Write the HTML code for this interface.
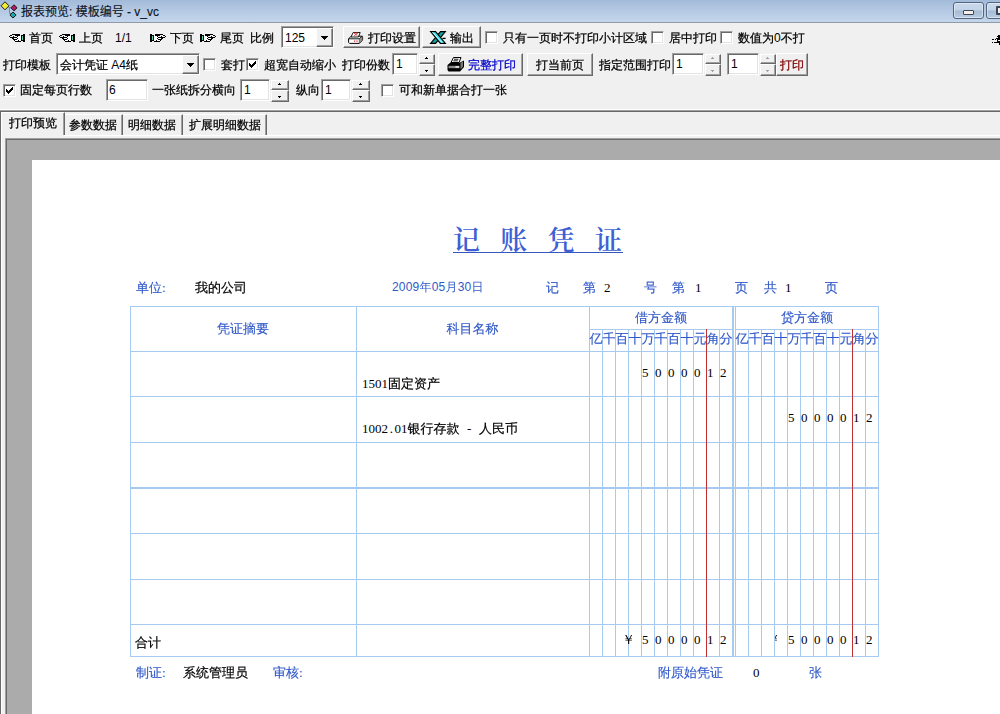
<!DOCTYPE html>
<html lang="zh-CN"><head><meta charset="utf-8"><title>报表预览</title>
<style>
html,body{margin:0;padding:0}
body{width:1000px;height:714px;overflow:hidden;background:#f0f0f0;position:relative;font-family:"Liberation Sans","WenQuanYi Zen Hei",sans-serif;font-size:12px;color:#000}
div,span{position:absolute;box-sizing:border-box;white-space:nowrap}
.t{line-height:14px;height:14px;-webkit-text-stroke:0.25px currentColor}
.l{position:static;-webkit-text-stroke:0}
.btn{border:1px solid;border-color:#fff #696969 #696969 #fff;box-shadow:inset -1px -1px 0 #a0a0a0;background:#f0f0f0}
.edit{border:1px solid;border-color:#a0a0a0 #fff #fff #a0a0a0;box-shadow:inset 1px 1px 0 #696969,inset -1px -1px 0 #e3e3e3;background:#fff}
.cb{width:13px;height:13px;border:1px solid;border-color:#a0a0a0 #fff #fff #a0a0a0;box-shadow:inset 1px 1px 0 #696969,inset -1px -1px 0 #e3e3e3;background:#fff}
.sp{border:1px solid;border-color:#fff #696969 #696969 #fff;box-shadow:inset -1px -1px 0 #a0a0a0;background:#f0f0f0}
.vl{width:1px;background:#a6caf0}
.hl{height:1px;background:#a6caf0}
.d{font-family:"Liberation Serif","WenQuanYi Zen Hei",serif;font-size:13px;line-height:15px;height:15px}
.b{color:#3059c9;-webkit-text-stroke:0.15px #3059c9}
.k{-webkit-text-stroke:0.2px #000}
.n{position:static;-webkit-text-stroke:0}
.h{position:static;display:inline-block;width:6.5px;text-align:center}
svg{position:absolute;overflow:visible}
</style></head>
<body>
<div style="left:0;top:0;width:1000px;height:22px;background:linear-gradient(180deg,#a2bbd9 0%,#b5c9e3 50%,#c4d6ec 100%)"></div>
<div style="left:0;top:22px;width:1000px;height:1px;background:#8f9aa6"></div>
<svg style="left:0;top:0" width="20" height="22" viewBox="0 0 20 22">
<path d="M8.5 7.5H11M9.5 7.5V13.5H11" stroke="#7d8794" fill="none" stroke-width="1"/>
<path d="M5 1.8L9 5.8L5 9.8L1 5.8Z" fill="#f4ec30" stroke="#1a1a1a" stroke-width="1"/>
<path d="M14 4.8L17.1 7.8L14 10.8L10.9 7.8Z" fill="#b4186c" stroke="#1a1a1a" stroke-width="1"/>
<path d="M13 12L16.1 15L13 18L9.9 15Z" fill="#18aaaa" stroke="#1a1a1a" stroke-width="1"/>
</svg>
<div class="t" style="left:21px;top:4px;font-family:'Liberation Sans','Noto Sans CJK SC',sans-serif;font-size:12px;line-height:16px;height:16px;color:#10151f;-webkit-text-stroke:0.15px #10151f">报表预览: 模板编号 - v_vc</div>
<div style="left:953px;top:2px;width:31px;height:17px;border:1px solid #52657f;border-radius:3px;background:linear-gradient(180deg,#c9d9ec 0%,#c2d3e8 48%,#a5bad4 52%,#b9cce3 100%);box-shadow:inset 0 0 0 1px rgba(255,255,255,.45)"></div>
<div style="left:963px;top:10px;width:11px;height:5px;border:1px solid #3c4656;border-radius:1px;background:#f4efec"></div>
<div style="left:986px;top:2px;width:31px;height:17px;border:1px solid #52657f;border-radius:3px;background:linear-gradient(180deg,#c9d9ec 0%,#c2d3e8 48%,#a5bad4 52%,#b9cce3 100%);box-shadow:inset 0 0 0 1px rgba(255,255,255,.45)"></div>
<div style="left:996px;top:6px;width:10px;height:9px;border:2px solid #3c4656;border-radius:1px;background:#f4efec"></div>
<svg style="left:9px;top:34px" width="16" height="8" viewBox="0 0 16 8" shape-rendering="crispEdges"><g><rect x="3" y="0" width="8" height="1" fill="#000"/><rect x="14" y="0" width="2" height="1" fill="#000"/><rect x="1" y="1" width="2" height="1" fill="#000"/><rect x="6" y="1" width="5" height="1" fill="#000"/><rect x="12" y="1" width="4" height="1" fill="#000"/><rect x="0" y="2" width="1" height="1" fill="#000"/><rect x="4" y="2" width="1" height="1" fill="#000"/><rect x="8" y="2" width="1" height="1" fill="#000"/><rect x="9" y="2" width="3" height="1" fill="#fff"/><rect x="12" y="2" width="1" height="1" fill="#000"/><rect x="13" y="2" width="1" height="1" fill="#58d8b8"/><rect x="14" y="2" width="2" height="1" fill="#000"/><rect x="1" y="3" width="7" height="1" fill="#000"/><rect x="8" y="3" width="4" height="1" fill="#fff"/><rect x="12" y="3" width="1" height="1" fill="#000"/><rect x="13" y="3" width="1" height="1" fill="#58d8b8"/><rect x="14" y="3" width="2" height="1" fill="#000"/><rect x="3" y="4" width="2" height="1" fill="#000"/><rect x="5" y="4" width="3" height="1" fill="#fff"/><rect x="8" y="4" width="1" height="1" fill="#000"/><rect x="9" y="4" width="3" height="1" fill="#fff"/><rect x="12" y="4" width="1" height="1" fill="#000"/><rect x="13" y="4" width="1" height="1" fill="#58d8b8"/><rect x="14" y="4" width="2" height="1" fill="#000"/><rect x="4" y="5" width="4" height="1" fill="#000"/><rect x="8" y="5" width="4" height="1" fill="#fff"/><rect x="12" y="5" width="1" height="1" fill="#000"/><rect x="13" y="5" width="1" height="1" fill="#58d8b8"/><rect x="14" y="5" width="2" height="1" fill="#000"/><rect x="5" y="6" width="1" height="1" fill="#000"/><rect x="6" y="6" width="3" height="1" fill="#fff"/><rect x="9" y="6" width="1" height="1" fill="#000"/><rect x="10" y="6" width="2" height="1" fill="#fff"/><rect x="12" y="6" width="4" height="1" fill="#000"/><rect x="6" y="7" width="6" height="1" fill="#000"/><rect x="14" y="7" width="2" height="1" fill="#000"/></g></svg>
<div class="t" style="left:29px;top:31px;">首页</div>
<svg style="left:59px;top:34px" width="16" height="8" viewBox="0 0 16 8" shape-rendering="crispEdges"><g><rect x="3" y="0" width="8" height="1" fill="#000"/><rect x="14" y="0" width="2" height="1" fill="#000"/><rect x="1" y="1" width="2" height="1" fill="#000"/><rect x="6" y="1" width="5" height="1" fill="#000"/><rect x="12" y="1" width="4" height="1" fill="#000"/><rect x="0" y="2" width="1" height="1" fill="#000"/><rect x="4" y="2" width="1" height="1" fill="#000"/><rect x="8" y="2" width="1" height="1" fill="#000"/><rect x="9" y="2" width="3" height="1" fill="#fff"/><rect x="12" y="2" width="1" height="1" fill="#000"/><rect x="13" y="2" width="1" height="1" fill="#58d8b8"/><rect x="14" y="2" width="2" height="1" fill="#000"/><rect x="1" y="3" width="7" height="1" fill="#000"/><rect x="8" y="3" width="4" height="1" fill="#fff"/><rect x="12" y="3" width="1" height="1" fill="#000"/><rect x="13" y="3" width="1" height="1" fill="#58d8b8"/><rect x="14" y="3" width="2" height="1" fill="#000"/><rect x="3" y="4" width="2" height="1" fill="#000"/><rect x="5" y="4" width="3" height="1" fill="#fff"/><rect x="8" y="4" width="1" height="1" fill="#000"/><rect x="9" y="4" width="3" height="1" fill="#fff"/><rect x="12" y="4" width="1" height="1" fill="#000"/><rect x="13" y="4" width="1" height="1" fill="#58d8b8"/><rect x="14" y="4" width="2" height="1" fill="#000"/><rect x="4" y="5" width="4" height="1" fill="#000"/><rect x="8" y="5" width="4" height="1" fill="#fff"/><rect x="12" y="5" width="1" height="1" fill="#000"/><rect x="13" y="5" width="1" height="1" fill="#58d8b8"/><rect x="14" y="5" width="2" height="1" fill="#000"/><rect x="5" y="6" width="1" height="1" fill="#000"/><rect x="6" y="6" width="3" height="1" fill="#fff"/><rect x="9" y="6" width="1" height="1" fill="#000"/><rect x="10" y="6" width="2" height="1" fill="#fff"/><rect x="12" y="6" width="4" height="1" fill="#000"/><rect x="6" y="7" width="6" height="1" fill="#000"/><rect x="14" y="7" width="2" height="1" fill="#000"/></g></svg>
<div class="t" style="left:79px;top:31px;">上页</div>
<div class="t" style="left:115px;top:31px;"><span class="l">1/1</span></div>
<svg style="left:150px;top:34px" width="16" height="8" viewBox="0 0 16 8" shape-rendering="crispEdges"><g transform="translate(16,0) scale(-1,1)"><rect x="3" y="0" width="8" height="1" fill="#000"/><rect x="14" y="0" width="2" height="1" fill="#000"/><rect x="1" y="1" width="2" height="1" fill="#000"/><rect x="6" y="1" width="5" height="1" fill="#000"/><rect x="12" y="1" width="4" height="1" fill="#000"/><rect x="0" y="2" width="1" height="1" fill="#000"/><rect x="4" y="2" width="1" height="1" fill="#000"/><rect x="8" y="2" width="1" height="1" fill="#000"/><rect x="9" y="2" width="3" height="1" fill="#fff"/><rect x="12" y="2" width="1" height="1" fill="#000"/><rect x="13" y="2" width="1" height="1" fill="#58d8b8"/><rect x="14" y="2" width="2" height="1" fill="#000"/><rect x="1" y="3" width="7" height="1" fill="#000"/><rect x="8" y="3" width="4" height="1" fill="#fff"/><rect x="12" y="3" width="1" height="1" fill="#000"/><rect x="13" y="3" width="1" height="1" fill="#58d8b8"/><rect x="14" y="3" width="2" height="1" fill="#000"/><rect x="3" y="4" width="2" height="1" fill="#000"/><rect x="5" y="4" width="3" height="1" fill="#fff"/><rect x="8" y="4" width="1" height="1" fill="#000"/><rect x="9" y="4" width="3" height="1" fill="#fff"/><rect x="12" y="4" width="1" height="1" fill="#000"/><rect x="13" y="4" width="1" height="1" fill="#58d8b8"/><rect x="14" y="4" width="2" height="1" fill="#000"/><rect x="4" y="5" width="4" height="1" fill="#000"/><rect x="8" y="5" width="4" height="1" fill="#fff"/><rect x="12" y="5" width="1" height="1" fill="#000"/><rect x="13" y="5" width="1" height="1" fill="#58d8b8"/><rect x="14" y="5" width="2" height="1" fill="#000"/><rect x="5" y="6" width="1" height="1" fill="#000"/><rect x="6" y="6" width="3" height="1" fill="#fff"/><rect x="9" y="6" width="1" height="1" fill="#000"/><rect x="10" y="6" width="2" height="1" fill="#fff"/><rect x="12" y="6" width="4" height="1" fill="#000"/><rect x="6" y="7" width="6" height="1" fill="#000"/><rect x="14" y="7" width="2" height="1" fill="#000"/></g></svg>
<div class="t" style="left:170px;top:31px;">下页</div>
<svg style="left:200px;top:34px" width="16" height="8" viewBox="0 0 16 8" shape-rendering="crispEdges"><g transform="translate(16,0) scale(-1,1)"><rect x="3" y="0" width="8" height="1" fill="#000"/><rect x="14" y="0" width="2" height="1" fill="#000"/><rect x="1" y="1" width="2" height="1" fill="#000"/><rect x="6" y="1" width="5" height="1" fill="#000"/><rect x="12" y="1" width="4" height="1" fill="#000"/><rect x="0" y="2" width="1" height="1" fill="#000"/><rect x="4" y="2" width="1" height="1" fill="#000"/><rect x="8" y="2" width="1" height="1" fill="#000"/><rect x="9" y="2" width="3" height="1" fill="#fff"/><rect x="12" y="2" width="1" height="1" fill="#000"/><rect x="13" y="2" width="1" height="1" fill="#58d8b8"/><rect x="14" y="2" width="2" height="1" fill="#000"/><rect x="1" y="3" width="7" height="1" fill="#000"/><rect x="8" y="3" width="4" height="1" fill="#fff"/><rect x="12" y="3" width="1" height="1" fill="#000"/><rect x="13" y="3" width="1" height="1" fill="#58d8b8"/><rect x="14" y="3" width="2" height="1" fill="#000"/><rect x="3" y="4" width="2" height="1" fill="#000"/><rect x="5" y="4" width="3" height="1" fill="#fff"/><rect x="8" y="4" width="1" height="1" fill="#000"/><rect x="9" y="4" width="3" height="1" fill="#fff"/><rect x="12" y="4" width="1" height="1" fill="#000"/><rect x="13" y="4" width="1" height="1" fill="#58d8b8"/><rect x="14" y="4" width="2" height="1" fill="#000"/><rect x="4" y="5" width="4" height="1" fill="#000"/><rect x="8" y="5" width="4" height="1" fill="#fff"/><rect x="12" y="5" width="1" height="1" fill="#000"/><rect x="13" y="5" width="1" height="1" fill="#58d8b8"/><rect x="14" y="5" width="2" height="1" fill="#000"/><rect x="5" y="6" width="1" height="1" fill="#000"/><rect x="6" y="6" width="3" height="1" fill="#fff"/><rect x="9" y="6" width="1" height="1" fill="#000"/><rect x="10" y="6" width="2" height="1" fill="#fff"/><rect x="12" y="6" width="4" height="1" fill="#000"/><rect x="6" y="7" width="6" height="1" fill="#000"/><rect x="14" y="7" width="2" height="1" fill="#000"/></g></svg>
<div class="t" style="left:220px;top:31px;">尾页</div>
<div class="t" style="left:250px;top:31px;">比例</div>
<div class="edit" style="left:281px;top:26px;width:53px;height:22px;"></div>
<div class="t" style="left:285px;top:31px;"><span class="l">125</span></div>
<div class="sp" style="left:316px;top:28px;width:17px;height:19px;"></div>
<svg style="left:321px;top:36px" width="7" height="4" viewBox="0 0 7 4" shape-rendering="crispEdges"><path d="M0 0h7v1h-7zM1 1h5v1h-5zM2 2h3v1h-3zM3 3h1v1h-1z" fill="#000"/></svg>
<div class="btn" style="left:343px;top:26px;width:77px;height:22px;"></div>
<svg style="left:348px;top:32px" width="16" height="12" viewBox="0 0 16 12">
<path d="M0.6 6.8L3.2 4.2H13.8L14.6 4.6V8.2L11.4 11.4H1.6L0.6 10.4Z" fill="#fff" stroke="#000" stroke-width="1"/>
<path d="M11.4 7L14.4 4.4V8.2L11.4 11.2Z" fill="#8c8c8c"/>
<path d="M0.8 6.8H11.2L14.2 4.2" fill="none" stroke="#000" stroke-width="0.9"/>
<path d="M11.3 6.8V11.2" stroke="#555" stroke-width="0.8"/>
<path d="M5.2 0.5H12.2L10.4 5H3Z" fill="#fff" stroke="#000" stroke-width="0.9"/>
<path d="M6.2 1.2L9.6 3.8M9.8 1.2L6 3.8M6 1H10" stroke="#d82828" stroke-width="0.8" fill="none"/>
<path d="M6 8.6h1.2v1.2h-1.2zM8.4 8.6h1.2v1.2h-1.2z" fill="#d82828"/>
</svg>
<div class="t" style="left:368px;top:31px;">打印设置</div>
<div class="btn" style="left:422px;top:26px;width:59px;height:22px;"></div>
<svg style="left:430px;top:31px" width="16" height="13" viewBox="0 0 16 13">
<path d="M10.5 0.6H15.4L5.6 12.4H0.6Z" fill="#169a9a" stroke="#000" stroke-width="1.1"/>
<path d="M0.6 0.6H5.6L15.4 12.4H10.4Z" fill="#3ce0ea" stroke="#000" stroke-width="1.1"/>
<path d="M2.6 1.2L12.4 12" stroke="#c8ffff" stroke-width="1" fill="none"/>
<path d="M12.4 7.4H15.6" stroke="#000" stroke-width="1.3"/>
</svg>
<div class="t" style="left:450px;top:31px;">输出</div>
<div class="cb" style="left:485px;top:31px;width:13px;height:13px;"></div>
<div class="t" style="left:503px;top:31px;">只有一页时不打印小计区域</div>
<div class="cb" style="left:651px;top:31px;width:13px;height:13px;"></div>
<div class="t" style="left:669px;top:31px;">居中打印</div>
<div class="cb" style="left:720px;top:31px;width:13px;height:13px;"></div>
<div class="t" style="left:738px;top:31px;">数值为<span class="l">0</span>不打</div>
<svg style="left:992px;top:35px" width="8" height="10" viewBox="0 0 8 10" shape-rendering="crispEdges" fill="#000"><rect x="6" y="0" width="1" height="1"/><rect x="7" y="0" width="1" height="1"/><rect x="5" y="1" width="1" height="1"/><rect x="6" y="1" width="1" height="1"/><rect x="7" y="1" width="1" height="1"/><rect x="6" y="2" width="1" height="1"/><rect x="7" y="2" width="1" height="1"/><rect x="4" y="3" width="1" height="1"/><rect x="5" y="3" width="1" height="1"/><rect x="6" y="3" width="1" height="1"/><rect x="7" y="3" width="1" height="1"/><rect x="0" y="4" width="1" height="1"/><rect x="1" y="4" width="1" height="1"/><rect x="3" y="4" width="1" height="1"/><rect x="5" y="4" width="1" height="1"/><rect x="6" y="4" width="1" height="1"/><rect x="7" y="4" width="1" height="1"/><rect x="5" y="5" width="1" height="1"/><rect x="5" y="6" width="1" height="1"/><rect x="6" y="6" width="1" height="1"/><rect x="7" y="6" width="1" height="1"/><rect x="0" y="7" width="1" height="1"/><rect x="2" y="7" width="1" height="1"/><rect x="3" y="7" width="1" height="1"/><rect x="4" y="7" width="1" height="1"/><rect x="5" y="7" width="1" height="1"/><rect x="6" y="7" width="1" height="1"/><rect x="7" y="7" width="1" height="1"/><rect x="7" y="8" width="1" height="1"/><rect x="7" y="9" width="1" height="1"/></svg>
<div class="t" style="left:3px;top:58px;">打印模板</div>
<div class="edit" style="left:56px;top:53px;width:144px;height:22px;"></div>
<div class="t" style="left:60px;top:58px;">会计凭证 <span class="l">A4</span>纸</div>
<div class="sp" style="left:182px;top:55px;width:17px;height:19px;"></div>
<svg style="left:187px;top:63px" width="7" height="4" viewBox="0 0 7 4" shape-rendering="crispEdges"><path d="M0 0h7v1h-7zM1 1h5v1h-5zM2 2h3v1h-3zM3 3h1v1h-1z" fill="#000"/></svg>
<div class="cb" style="left:203px;top:58px;width:13px;height:13px;"></div>
<div class="t" style="left:221px;top:58px;">套打</div>
<div class="cb" style="left:246px;top:58px;width:13px;height:13px;"></div>
<svg style="left:249px;top:61px" width="7" height="7" viewBox="0 0 7 7" shape-rendering="crispEdges"><path d="M0 2h1v3h-1zM1 3h1v3h-1zM2 4h1v3h-1zM3 3h1v3h-1zM4 2h1v3h-1zM5 1h1v3h-1zM6 0h1v3h-1z" fill="#000"/></svg>
<div class="t" style="left:264px;top:58px;">超宽自动缩小</div>
<div class="t" style="left:342px;top:58px;">打印份数</div>
<div class="edit" style="left:392px;top:53px;width:26px;height:22px;"></div>
<div class="t" style="left:396px;top:57px;"><span class="l">1</span></div>
<div class="sp" style="left:419px;top:54px;width:16px;height:10px;"></div>
<div class="sp" style="left:419px;top:64px;width:16px;height:12px;"></div>
<svg style="left:425px;top:57px" width="3" height="2" viewBox="0 0 3 2" shape-rendering="crispEdges"><path d="M1 0h1v1h-1zM0 1h3v1h-3z" fill="#000"/></svg>
<svg style="left:425px;top:70px" width="3" height="2" viewBox="0 0 3 2" shape-rendering="crispEdges"><path d="M0 0h3v1h-3zM1 1h1v1h-1z" fill="#000"/></svg>
<div class="btn" style="left:438px;top:53px;width:85px;height:23px;"></div>
<svg style="left:447px;top:57px" width="18" height="15" viewBox="0 0 18 15">
<path d="M6.5 0.5H14L12 5.5H4Z" fill="#fff" stroke="#000" stroke-width="1"/>
<path d="M7 2.2H11.5M6.3 3.8H10.8" stroke="#000" stroke-width="0.9"/>
<path d="M3.5 5.5H13L17 3.5V10L13 14.5H1.5L0.5 13V8Z" fill="#000"/>
<path d="M1.5 8.8H12.5V11.2H1.5Z" fill="#8a8a8a"/>
<path d="M8.5 9.3H12V10.6H8.5Z" fill="#fff"/>
<path d="M13.5 6L16 4.6V9.4L13.5 12.5Z" fill="#777"/>
</svg>
<div class="t" style="left:468px;top:58px;color:#0000cc">完整打印</div>
<div class="btn" style="left:527px;top:53px;width:66px;height:23px;"></div>
<div class="t" style="left:536px;top:58px;">打当前页</div>
<div class="t" style="left:599px;top:58px;">指定范围打印</div>
<div class="edit" style="left:672px;top:53px;width:32px;height:22px;"></div>
<div class="t" style="left:676px;top:57px;"><span class="l">1</span></div>
<div class="sp" style="left:705px;top:54px;width:16px;height:10px;"></div>
<div class="sp" style="left:705px;top:64px;width:16px;height:12px;"></div>
<svg style="left:711px;top:57px" width="3" height="2" viewBox="0 0 3 2" shape-rendering="crispEdges"><path d="M1 0h1v1h-1zM0 1h3v1h-3z" fill="#a0a0a0"/></svg>
<svg style="left:711px;top:70px" width="3" height="2" viewBox="0 0 3 2" shape-rendering="crispEdges"><path d="M0 0h3v1h-3zM1 1h1v1h-1z" fill="#a0a0a0"/></svg>
<div class="edit" style="left:727px;top:53px;width:32px;height:22px;"></div>
<div class="t" style="left:731px;top:57px;"><span class="l">1</span></div>
<div class="sp" style="left:760px;top:54px;width:16px;height:10px;"></div>
<div class="sp" style="left:760px;top:64px;width:16px;height:12px;"></div>
<svg style="left:766px;top:57px" width="3" height="2" viewBox="0 0 3 2" shape-rendering="crispEdges"><path d="M1 0h1v1h-1zM0 1h3v1h-3z" fill="#a0a0a0"/></svg>
<svg style="left:766px;top:70px" width="3" height="2" viewBox="0 0 3 2" shape-rendering="crispEdges"><path d="M0 0h3v1h-3zM1 1h1v1h-1z" fill="#a0a0a0"/></svg>
<div class="btn" style="left:776px;top:53px;width:32px;height:23px;"></div>
<div class="t" style="left:780px;top:58px;color:#800000">打印</div>
<div class="cb" style="left:3px;top:84px;width:13px;height:13px;"></div>
<svg style="left:6px;top:87px" width="7" height="7" viewBox="0 0 7 7" shape-rendering="crispEdges"><path d="M0 2h1v3h-1zM1 3h1v3h-1zM2 4h1v3h-1zM3 3h1v3h-1zM4 2h1v3h-1zM5 1h1v3h-1zM6 0h1v3h-1z" fill="#000"/></svg>
<div class="t" style="left:20px;top:83px;">固定每页行数</div>
<div class="edit" style="left:106px;top:79px;width:42px;height:22px;"></div>
<div class="t" style="left:109px;top:83px;"><span class="l">6</span></div>
<div class="t" style="left:152px;top:83px;">一张纸拆分横向</div>
<div class="edit" style="left:240px;top:79px;width:30px;height:22px;"></div>
<div class="t" style="left:244px;top:83px;"><span class="l">1</span></div>
<div class="sp" style="left:271px;top:80px;width:18px;height:10px;"></div>
<div class="sp" style="left:271px;top:90px;width:18px;height:12px;"></div>
<svg style="left:278px;top:83px" width="3" height="2" viewBox="0 0 3 2" shape-rendering="crispEdges"><path d="M1 0h1v1h-1zM0 1h3v1h-3z" fill="#000"/></svg>
<svg style="left:278px;top:96px" width="3" height="2" viewBox="0 0 3 2" shape-rendering="crispEdges"><path d="M0 0h3v1h-3zM1 1h1v1h-1z" fill="#000"/></svg>
<div class="t" style="left:296px;top:83px;">纵向</div>
<div class="edit" style="left:321px;top:79px;width:30px;height:22px;"></div>
<div class="t" style="left:325px;top:83px;"><span class="l">1</span></div>
<div class="sp" style="left:352px;top:80px;width:18px;height:10px;"></div>
<div class="sp" style="left:352px;top:90px;width:18px;height:12px;"></div>
<svg style="left:359px;top:83px" width="3" height="2" viewBox="0 0 3 2" shape-rendering="crispEdges"><path d="M1 0h1v1h-1zM0 1h3v1h-3z" fill="#000"/></svg>
<svg style="left:359px;top:96px" width="3" height="2" viewBox="0 0 3 2" shape-rendering="crispEdges"><path d="M0 0h3v1h-3zM1 1h1v1h-1z" fill="#000"/></svg>
<div class="cb" style="left:381px;top:84px;width:13px;height:13px;"></div>
<div class="t" style="left:399px;top:83px;">可和新单据合打一张</div>
<div class="" style="left:0px;top:109px;width:1000px;height:1px;background:#fff"></div>
<div class="" style="left:0px;top:110px;width:1000px;height:1px;background:#a0a0a0"></div>
<div class="" style="left:0px;top:111px;width:1000px;height:1px;background:#696969"></div>
<div class="" style="left:0px;top:111px;width:1px;height:603px;background:#696969"></div>
<div style="left:65px;top:114px;width:58px;height:21px;border-top:1px solid #fff;border-right:1px solid #696969;box-shadow:inset -1px 0 0 #a0a0a0;background:#f0f0f0"></div>
<div class="t" style="left:69px;top:118px;">参数数据</div>
<div style="left:123px;top:114px;width:60px;height:21px;border-top:1px solid #fff;border-right:1px solid #696969;box-shadow:inset -1px 0 0 #a0a0a0;background:#f0f0f0"></div>
<div class="t" style="left:128px;top:118px;">明细数据</div>
<div style="left:183px;top:114px;width:84px;height:21px;border-top:1px solid #fff;border-right:1px solid #696969;box-shadow:inset -1px 0 0 #a0a0a0;background:#f0f0f0"></div>
<div class="t" style="left:189px;top:118px;">扩展明细数据</div>
<div class="" style="left:1px;top:135px;width:999px;height:1px;background:#fff"></div>
<div class="" style="left:1px;top:135px;width:1px;height:579px;background:#fff"></div>
<div style="left:1px;top:112px;width:64px;height:23px;border-top:1px solid #fff;border-left:1px solid #fff;border-right:1px solid #696969;box-shadow:inset -1px 0 0 #a0a0a0;background:#f0f0f0"></div>
<div class="" style="left:2px;top:135px;width:62px;height:1px;background:#f0f0f0"></div>
<div class="t" style="left:9px;top:116px;">打印预览</div>
<div class="" style="left:5px;top:138px;width:995px;height:576px;background:#a0a0a0"></div>
<div class="" style="left:6px;top:139px;width:994px;height:575px;background:#696969"></div>
<div class="" style="left:7px;top:140px;width:993px;height:574px;background:#ababab"></div>
<div class="" style="left:32px;top:160px;width:968px;height:554px;background:#fff"></div>
<div style="left:453px;top:224px;height:34px;line-height:34px;font-family:'Liberation Serif','Noto Serif CJK SC',serif;font-weight:600;font-size:27px;color:#3d60d4;letter-spacing:20.3px;">记账凭证</div>
<div class="" style="left:453px;top:252px;width:170px;height:1px;background:#3558c0"></div>
<div class="d b" style="left:136px;top:280px;">单位:</div>
<div class="d k" style="left:195px;top:280px;">我的公司</div>
<div class="t b" style="left:392px;top:280px;letter-spacing:0.2px;-webkit-text-stroke:0">2009年05月30日</div>
<div class="d b" style="left:546px;top:280px;">记</div>
<div class="d b" style="left:583px;top:280px;">第</div>
<div class="d" style="left:604px;top:280px;">2</div>
<div class="d b" style="left:644px;top:280px;">号</div>
<div class="d b" style="left:672px;top:280px;">第</div>
<div class="d" style="left:695px;top:280px;">1</div>
<div class="d b" style="left:735px;top:280px;">页</div>
<div class="d b" style="left:764px;top:280px;">共</div>
<div class="d" style="left:785px;top:280px;">1</div>
<div class="d b" style="left:825px;top:280px;">页</div>
<div class="hl" style="left:130px;top:306px;width:749px;height:1px;"></div>
<div class="hl" style="left:130px;top:351px;width:749px;height:1px;"></div>
<div class="hl" style="left:130px;top:396px;width:749px;height:1px;"></div>
<div class="hl" style="left:130px;top:442px;width:749px;height:1px;"></div>
<div class="hl" style="left:130px;top:488px;width:749px;height:1px;"></div>
<div class="hl" style="left:130px;top:533px;width:749px;height:1px;"></div>
<div class="hl" style="left:130px;top:579px;width:749px;height:1px;"></div>
<div class="hl" style="left:130px;top:624px;width:749px;height:1px;"></div>
<div class="hl" style="left:130px;top:656px;width:749px;height:1px;"></div>
<div class="hl" style="left:130px;top:487px;width:749px;height:1px;"></div>
<div class="hl" style="left:589px;top:329px;width:144px;height:1px;"></div>
<div class="hl" style="left:735px;top:329px;width:144px;height:1px;"></div>
<div class="vl" style="left:130px;top:306px;width:1px;height:351px;"></div>
<div class="vl" style="left:356px;top:306px;width:1px;height:351px;"></div>
<div class="vl" style="left:589px;top:306px;width:1px;height:351px;background:#a6caf0"></div>
<div class="vl" style="left:602px;top:329px;width:1px;height:328px;background:#a6caf0"></div>
<div class="vl" style="left:615px;top:329px;width:1px;height:328px;background:#a6caf0"></div>
<div class="vl" style="left:628px;top:329px;width:1px;height:328px;background:#a6caf0"></div>
<div class="vl" style="left:641px;top:329px;width:1px;height:328px;background:#a6caf0"></div>
<div class="vl" style="left:654px;top:329px;width:1px;height:328px;background:#a6caf0"></div>
<div class="vl" style="left:667px;top:329px;width:1px;height:328px;background:#a6caf0"></div>
<div class="vl" style="left:680px;top:329px;width:1px;height:328px;background:#a6caf0"></div>
<div class="vl" style="left:693px;top:329px;width:1px;height:328px;background:#a6caf0"></div>
<div class="vl" style="left:706px;top:329px;width:1px;height:328px;background:#c03030"></div>
<div class="vl" style="left:719px;top:329px;width:1px;height:328px;background:#a6caf0"></div>
<div class="vl" style="left:732px;top:306px;width:1px;height:351px;background:#a6caf0"></div>
<div class="vl" style="left:735px;top:306px;width:1px;height:351px;background:#a6caf0"></div>
<div class="vl" style="left:748px;top:329px;width:1px;height:328px;background:#a6caf0"></div>
<div class="vl" style="left:761px;top:329px;width:1px;height:328px;background:#a6caf0"></div>
<div class="vl" style="left:774px;top:329px;width:1px;height:328px;background:#a6caf0"></div>
<div class="vl" style="left:787px;top:329px;width:1px;height:328px;background:#a6caf0"></div>
<div class="vl" style="left:800px;top:329px;width:1px;height:328px;background:#a6caf0"></div>
<div class="vl" style="left:813px;top:329px;width:1px;height:328px;background:#a6caf0"></div>
<div class="vl" style="left:826px;top:329px;width:1px;height:328px;background:#a6caf0"></div>
<div class="vl" style="left:839px;top:329px;width:1px;height:328px;background:#a6caf0"></div>
<div class="vl" style="left:852px;top:329px;width:1px;height:328px;background:#c03030"></div>
<div class="vl" style="left:865px;top:329px;width:1px;height:328px;background:#a6caf0"></div>
<div class="vl" style="left:878px;top:306px;width:1px;height:351px;background:#a6caf0"></div>
<div class="vl" style="left:733px;top:306px;width:1px;height:351px;"></div>
<div class="d b" style="left:130px;top:321px;width:226px;text-align:center">凭证摘要</div>
<div class="d b" style="left:356px;top:321px;width:233px;text-align:center">科目名称</div>
<div class="d b" style="left:589px;top:310px;width:144px;text-align:center">借方金额</div>
<div class="d b" style="left:735px;top:310px;width:144px;text-align:center">贷方金额</div>
<div class="d b" style="left:589px;top:331px;width:14px;text-align:center">亿</div>
<div class="d b" style="left:735px;top:331px;width:14px;text-align:center">亿</div>
<div class="d b" style="left:602px;top:331px;width:14px;text-align:center">千</div>
<div class="d b" style="left:748px;top:331px;width:14px;text-align:center">千</div>
<div class="d b" style="left:615px;top:331px;width:14px;text-align:center">百</div>
<div class="d b" style="left:761px;top:331px;width:14px;text-align:center">百</div>
<div class="d b" style="left:628px;top:331px;width:14px;text-align:center">十</div>
<div class="d b" style="left:774px;top:331px;width:14px;text-align:center">十</div>
<div class="d b" style="left:641px;top:331px;width:14px;text-align:center">万</div>
<div class="d b" style="left:787px;top:331px;width:14px;text-align:center">万</div>
<div class="d b" style="left:654px;top:331px;width:14px;text-align:center">千</div>
<div class="d b" style="left:800px;top:331px;width:14px;text-align:center">千</div>
<div class="d b" style="left:667px;top:331px;width:14px;text-align:center">百</div>
<div class="d b" style="left:813px;top:331px;width:14px;text-align:center">百</div>
<div class="d b" style="left:680px;top:331px;width:14px;text-align:center">十</div>
<div class="d b" style="left:826px;top:331px;width:14px;text-align:center">十</div>
<div class="d b" style="left:693px;top:331px;width:14px;text-align:center">元</div>
<div class="d b" style="left:839px;top:331px;width:14px;text-align:center">元</div>
<div class="d b" style="left:706px;top:331px;width:14px;text-align:center">角</div>
<div class="d b" style="left:852px;top:331px;width:14px;text-align:center">角</div>
<div class="d b" style="left:719px;top:331px;width:14px;text-align:center">分</div>
<div class="d b" style="left:865px;top:331px;width:14px;text-align:center">分</div>
<div class="d k" style="left:362px;top:376px;"><span class="n">1501</span>固定资产</div>
<div class="d k" style="left:362px;top:421px;"><span class="n">1002<span class="h">.</span>01</span>银行存款<span class="n"><span class="h">&nbsp;</span><span class="h">-</span><span class="h">&nbsp;</span></span>人民币</div>
<div class="d k" style="left:135px;top:635px;">合计</div>
<div class="d" style="left:642px;top:365px;">5</div>
<div class="d" style="left:655px;top:365px;">0</div>
<div class="d" style="left:668px;top:365px;">0</div>
<div class="d" style="left:681px;top:365px;">0</div>
<div class="d" style="left:694px;top:365px;">0</div>
<div class="d" style="left:707px;top:365px;">1</div>
<div class="d" style="left:720px;top:365px;">2</div>
<div class="d" style="left:788px;top:410px;">5</div>
<div class="d" style="left:801px;top:410px;">0</div>
<div class="d" style="left:814px;top:410px;">0</div>
<div class="d" style="left:827px;top:410px;">0</div>
<div class="d" style="left:840px;top:410px;">0</div>
<div class="d" style="left:853px;top:410px;">1</div>
<div class="d" style="left:866px;top:410px;">2</div>
<div class="d" style="left:642px;top:632px;">5</div>
<div class="d" style="left:655px;top:632px;">0</div>
<div class="d" style="left:668px;top:632px;">0</div>
<div class="d" style="left:681px;top:632px;">0</div>
<div class="d" style="left:694px;top:632px;">0</div>
<div class="d" style="left:707px;top:632px;">1</div>
<div class="d" style="left:720px;top:632px;">2</div>
<div class="d" style="left:788px;top:632px;">5</div>
<div class="d" style="left:801px;top:632px;">0</div>
<div class="d" style="left:814px;top:632px;">0</div>
<div class="d" style="left:827px;top:632px;">0</div>
<div class="d" style="left:840px;top:632px;">0</div>
<div class="d" style="left:853px;top:632px;">1</div>
<div class="d" style="left:866px;top:632px;">2</div>
<div class="d" style="left:622px;top:632px;font-family:'WenQuanYi Zen Hei',sans-serif">￥</div>
<div class="d" style="left:775px;top:632px;width:4px;overflow:hidden;font-family:'WenQuanYi Zen Hei',sans-serif"><span style="position:relative;left:-8px">￥</span></div>
<div class="d b" style="left:136px;top:665px;">制证:</div>
<div class="d k" style="left:183px;top:665px;">系统管理员</div>
<div class="d b" style="left:273px;top:665px;">审核:</div>
<div class="d b" style="left:658px;top:665px;">附原始凭证</div>
<div class="d" style="left:753px;top:665px;">0</div>
<div class="d b" style="left:809px;top:665px;">张</div>
</body></html>
